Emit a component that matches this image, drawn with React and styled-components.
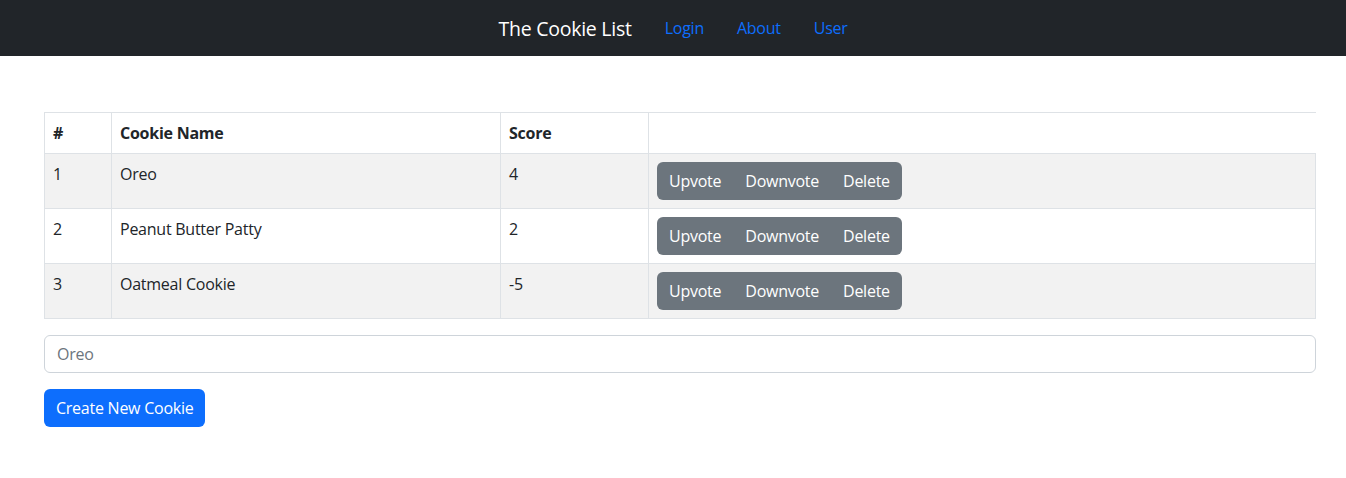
import React from 'react';
import styled, {createGlobalStyle} from 'styled-components';

const Global = createGlobalStyle`
body {
    margin: 0;
    font-family: "Open Sans", "Noto Sans", sans-serif;
    font-size: 16px;
    letter-spacing: -0.25px;
    color: #212529;
    background: #fff;
}`;

const Navbar = styled.nav`
height: 56px;
background: #212529;
display: flex;
align-items: center;
justify-content: center;
gap: 33px;`;

const Brand = styled.span`
color: #fff;
font-size: 19.5px;`;

const NavLink = styled.a`
color: #0d6efd;
font-size: 16px;
text-decoration: none;`;

const Main = styled.main`
padding: 56px 30px 0 44px;`;

const Table = styled.table`
width: 100%;
border-collapse: collapse;
margin-bottom: 16px;`;

const Th = styled.th`
text-align: left;
font-weight: bold;
padding: 8px;
height: 24px;
border-top: 1px solid #dee2e6;
border-bottom: 1px solid #dee2e6;
border-left: 1px solid #dee2e6;
width: ${p => p.$w || 'auto'};`;

const Row = styled.tr`
background: ${p => p.$striped ? '#f2f2f2' : '#fff'};`;

const Td = styled.td`
padding: ${p => p.$actions ? '8px' : '9px 8px 7px'};
vertical-align: top;
border: 1px solid #dee2e6;
height: 38px;`;

const BtnGroup = styled.div`
display: inline-flex;
border-radius: 6px;
overflow: hidden;`;

const GroupBtn = styled.button`
background: #6c757d;
color: #fff;
border: none;
font: inherit;
letter-spacing: inherit;
padding: 6px 12px;
line-height: 26px;`;

const Input = styled.input`
display: block;
box-sizing: border-box;
width: 100%;
height: 38px;
padding: 6px 12px;
font: inherit;
letter-spacing: inherit;
color: #212529;
border: 1px solid #ced4da;
border-radius: 6px;
margin-bottom: 16px;
&::placeholder { color: #6c757d; }`;

const PrimaryBtn = styled.button`
background: #0d6efd;
color: #fff;
border: none;
border-radius: 6px;
font: inherit;
letter-spacing: inherit;
height: 38px;
padding: 0 12px;`;

const cookies = [
    {id: 1, name: 'Oreo', score: 4},
    {id: 2, name: 'Peanut Butter Patty', score: 2},
    {id: 3, name: 'Oatmeal Cookie', score: -5},
];

const App = () => (
    <>
    <Global/>
    <Navbar>
        <Brand>The Cookie List</Brand>
        <NavLink>Login</NavLink>
        <NavLink>About</NavLink>
        <NavLink>User</NavLink>
    </Navbar>
    <Main>
        <Table>
            <thead>
                <tr>
                    <Th $w="50px">#</Th>
                    <Th $w="372px">Cookie Name</Th>
                    <Th $w="131px">Score</Th>
                    <Th></Th>
                </tr>
            </thead>
            <tbody>
                {cookies.map((c, i) => (
                    <Row key={c.id} $striped={i % 2 === 0}>
                        <Td>{c.id}</Td>
                        <Td>{c.name}</Td>
                        <Td>{c.score}</Td>
                        <Td $actions>
                            <BtnGroup>
                                <GroupBtn>Upvote</GroupBtn>
                                <GroupBtn>Downvote</GroupBtn>
                                <GroupBtn>Delete</GroupBtn>
                            </BtnGroup>
                        </Td>
                    </Row>
                ))}
            </tbody>
        </Table>
        <Input placeholder="Oreo"/>
        <PrimaryBtn>Create New Cookie</PrimaryBtn>
    </Main>
    </>
);
export default App;
